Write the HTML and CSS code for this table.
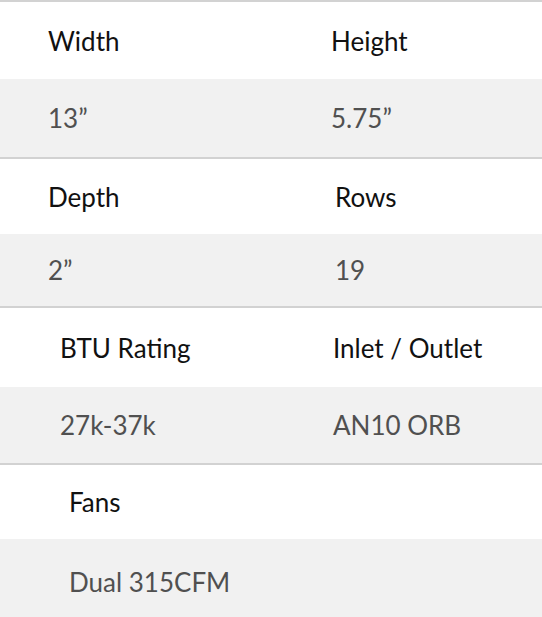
FILE: index.html
```html
<!DOCTYPE html>
<html>
<head>
<meta charset="utf-8">
<link rel="stylesheet" href="styles.css">
</head>
<body>
<div class="specs">
  <div class="group g1">
    <div class="row label"><div class="cell">Width</div><div class="cell">Height</div></div>
    <div class="row value"><div class="cell">13”</div><div class="cell">5.75”</div></div>
  </div>
  <div class="group g2">
    <div class="row label"><div class="cell">Depth</div><div class="cell">Rows</div></div>
    <div class="row value"><div class="cell">2”</div><div class="cell">19</div></div>
  </div>
  <div class="group g3">
    <div class="row label"><div class="cell">BTU Rating</div><div class="cell">Inlet / Outlet</div></div>
    <div class="row value"><div class="cell">27k-37k</div><div class="cell">AN10 ORB</div></div>
  </div>
  <div class="group g4">
    <div class="row label"><div class="cell">Fans</div><div class="cell"></div></div>
    <div class="row value"><div class="cell">Dual 315CFM</div><div class="cell"></div></div>
  </div>
</div>
</body>
</html>
```

FILE: styles.css
```css
html, body {
  margin: 0;
  padding: 0;
  background: #fff;
}
body {
  font-family: "Lato", "Liberation Sans", sans-serif;
  font-size: 26px;
  width: 542px;
  height: 617px;
  overflow: hidden;
}
.specs {
  display: flex;
  flex-direction: column;
}
.group {
  border-top: 2px solid #d2d2d2;
}
.row {
  display: grid;
  align-items: center;
}
.label {
  background: #fff;
  color: #111;
}
.value {
  background: #f1f1f1;
  color: #505050;
}
.g1 .row { grid-template-columns: 283px 1fr; padding-left: 48px; }
.g2 .row { grid-template-columns: 287px 1fr; padding-left: 48px; }
.g3 .row { grid-template-columns: 273px 1fr; padding-left: 60px; }
.g4 .row { grid-template-columns: 1fr 1fr; padding-left: 69px; }
.g1 .label { height: 77px; }
.g1 .value { height: 78px; }
.g2 .label { height: 75px; }
.g2 .value { height: 72px; }
.g3 .label { height: 79px; }
.g3 .value { height: 76px; }
.g4 .label { height: 74px; }
.g4 .value { height: 86px; }
```
